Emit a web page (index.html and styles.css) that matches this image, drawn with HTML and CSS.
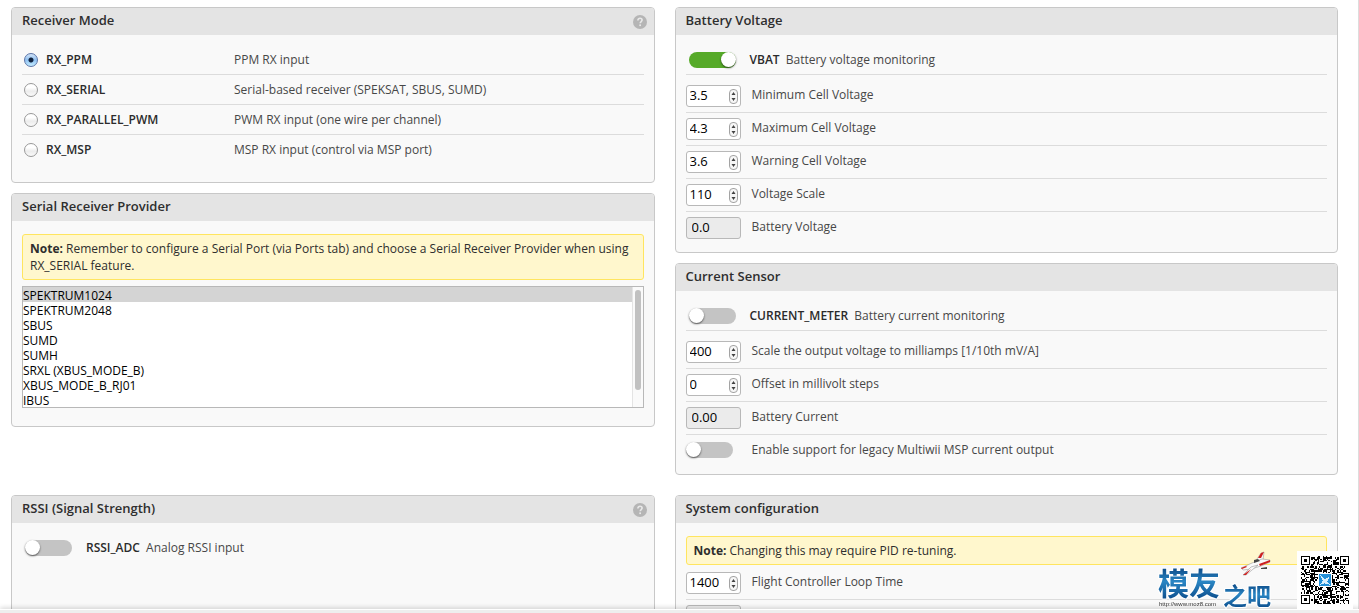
FILE: index.html
```html
<!DOCTYPE html>
<html lang="en">
<head>
    <meta charset="UTF-8">
    <title>Configuration</title>
    <link rel="stylesheet" href="styles.css">
</head>
<body>

    <svg class="defs" aria-hidden="true">
        <symbol id="spinner" viewBox="0 0 9 15">
            <rect x=".5" y=".5" width="8" height="14" rx="3.5" fill="#f6f6f6" stroke="#a3a3a3"/>
            <path d="M2.5 6 4.5 3 6.5 6ZM2.5 9 4.5 12 6.5 9Z" fill="#444"/>
        </symbol>
        <symbol id="help" viewBox="0 0 14 14">
            <circle cx="7" cy="7" r="7" fill="#b5b5b5"/>
            <path d="M4.9 5.4C4.9 4 5.8 3.3 7 3.3s2.1.7 2.1 1.8C9.100 6.500 7.200 6.600 7.200 8.300" fill="none" stroke="#e8e8e8" stroke-width="1.6"/>
            <rect x="6.300" y="9.400" width="1.700" height="1.700" fill="#e8e8e8"/>
        </symbol>
    </svg>

    <div class="content">
        <div class="columns">
            <div class="col left">
                <section class="box">
                    <h2 class="title">Receiver Mode <svg class="help"><use href="#help"/></svg></h2>
                    <div class="inner modes">
                        <div class="line">
                            <input type="radio" class="radio" name="rx" id="rx-ppm" checked>
                            <label for="rx-ppm">RX_PPM</label>
                            <span>PPM RX input</span>
                        </div>
                        <div class="line">
                            <input type="radio" class="radio" name="rx" id="rx-serial">
                            <label for="rx-serial">RX_SERIAL</label>
                            <span>Serial-based receiver (SPEKSAT, SBUS, SUMD)</span>
                        </div>
                        <div class="line">
                            <input type="radio" class="radio" name="rx" id="rx-pwm">
                            <label for="rx-pwm">RX_PARALLEL_PWM</label>
                            <span>PWM RX input (one wire per channel)</span>
                        </div>
                        <div class="line">
                            <input type="radio" class="radio" name="rx" id="rx-msp">
                            <label for="rx-msp">RX_MSP</label>
                            <span>MSP RX input (control via MSP port)</span>
                        </div>
                    </div>
                </section>

                <section class="box">
                    <h2 class="title" id="provider-title">Serial Receiver Provider</h2>
                    <div class="inner provider">
                        <p class="note"><strong>Note:</strong> Remember to configure a Serial Port (via Ports tab) and choose a Serial Receiver Provider when using RX_SERIAL feature.</p>
                        <div class="list-wrap">
                            <select class="list" size="8" aria-labelledby="provider-title">
                                <option selected>SPEKTRUM1024</option>
                                <option>SPEKTRUM2048</option>
                                <option>SBUS</option>
                                <option>SUMD</option>
                                <option>SUMH</option>
                                <option>SRXL (XBUS_MODE_B)</option>
                                <option>XBUS_MODE_B_RJ01</option>
                                <option>IBUS</option>
                            </select>
                            <span class="track"><span class="thumb"></span></span>
                        </div>
                    </div>
                </section>
            </div>

            <div class="col">
                <section class="box">
                    <h2 class="title">Battery Voltage</h2>
                    <div class="inner">
                        <div class="line feature">
                            <input type="checkbox" class="toggle" id="vbat" checked>
                            <label for="vbat"><b>VBAT</b> Battery voltage monitoring</label>
                        </div>
                        <div class="rows">
                            <div class="row">
                                <span class="number"><input type="number" id="vmin" value="3.5" step="0.1"><svg><use href="#spinner"/></svg></span>
                                <label for="vmin">Minimum Cell Voltage</label>
                            </div>
                            <div class="row">
                                <span class="number"><input type="number" id="vmax" value="4.3" step="0.1"><svg><use href="#spinner"/></svg></span>
                                <label for="vmax">Maximum Cell Voltage</label>
                            </div>
                            <div class="row">
                                <span class="number"><input type="number" id="vwarn" value="3.6" step="0.1"><svg><use href="#spinner"/></svg></span>
                                <label for="vwarn">Warning Cell Voltage</label>
                            </div>
                            <div class="row">
                                <span class="number"><input type="number" id="vscale" value="110"><svg><use href="#spinner"/></svg></span>
                                <label for="vscale">Voltage Scale</label>
                            </div>
                            <div class="row">
                                <span class="number"><input type="text" id="voltage" value="0.0" readonly></span>
                                <label for="voltage">Battery Voltage</label>
                            </div>
                        </div>
                    </div>
                </section>

                <section class="box">
                    <h2 class="title">Current Sensor</h2>
                    <div class="inner">
                        <div class="line feature">
                            <input type="checkbox" class="toggle" id="meter">
                            <label for="meter"><b>CURRENT_METER</b> Battery current monitoring</label>
                        </div>
                        <div class="rows">
                            <div class="row">
                                <span class="number"><input type="number" id="cscale" value="400"><svg><use href="#spinner"/></svg></span>
                                <label for="cscale">Scale the output voltage to milliamps [1/10th mV/A]</label>
                            </div>
                            <div class="row">
                                <span class="number"><input type="number" id="coffset" value="0"><svg><use href="#spinner"/></svg></span>
                                <label for="coffset">Offset in millivolt steps</label>
                            </div>
                            <div class="row">
                                <span class="number"><input type="text" id="current" value="0.00" readonly></span>
                                <label for="current">Battery Current</label>
                            </div>
                            <div class="row switch">
                                <input type="checkbox" class="toggle" id="legacy">
                                <label for="legacy">Enable support for legacy Multiwii MSP current output</label>
                            </div>
                        </div>
                    </div>
                </section>
            </div>

            <div class="col left">
                <section class="box fill">
                    <h2 class="title">RSSI (Signal Strength) <svg class="help"><use href="#help"/></svg></h2>
                    <div class="inner">
                        <div class="line feature plain">
                            <input type="checkbox" class="toggle" id="rssi">
                            <label for="rssi"><b>RSSI_ADC</b> Analog RSSI input</label>
                        </div>
                    </div>
                </section>
            </div>

            <div class="col">
                <section class="box">
                    <h2 class="title">System configuration</h2>
                    <div class="inner system">
                        <p class="note"><strong>Note:</strong> Changing this may require PID re-tuning.</p>
                        <div class="row">
                            <span class="number"><input type="number" id="loop" value="1400"><svg><use href="#spinner"/></svg></span>
                            <label for="loop">Flight Controller Loop Time</label>
                        </div>
                        <div class="row">
                            <span class="number"><input type="text" readonly aria-label="Cycle"></span>
                        </div>
                    </div>
                </section>
            </div>
        </div>
    </div>
    <div class="statusbar"></div>

    <div class="watermark">
        <svg class="logo" width="124" height="64" viewBox="0 0 124 64">
            <defs>
                <linearGradient id="blue" x1="0" y1="0" x2="0" y2="1">
                    <stop offset=".2" stop-color="#0d4a86"/>
                    <stop offset=".5" stop-color="#2a86c4"/>
                    <stop offset=".9" stop-color="#0c4d8c"/>
                </linearGradient>
            </defs>
            <g class="glyphs">
                <text x="5" y="46" font-size="31">模友</text>
                <text x="70" y="56" font-size="24">之吧</text>
            </g>
            <text class="url" x="6" y="57">http://www.moz8.com</text>
            <!-- plane -->
            <path d="M102 13 108 4 111 3 110 11Z" fill="#fafafa" stroke="#888" stroke-width=".5"/>
            <path d="M105 9 108 4 111 3 108 9Z" fill="#cf2020"/>
            <path d="M88 19 99 14 109 10 117 11 117 13 108 17 98 20 90 21Z" fill="#fafafa" stroke="#888" stroke-width=".5"/>
            <path d="M98 18 105 16 93 26 90 26Z" fill="#fafafa" stroke="#888" stroke-width=".5"/>
            <path d="M94 23 98 20 93 26 90 26ZM88 19 93 17 94 18 89 20ZM106 15 117 11 117 13 107 17Z" fill="#cf2020"/>
            <path d="M108 19 114 18 114 20 108 20ZM101 11 105 10 107 12 101 14Z" fill="#444"/>
        </svg>
        <svg class="qr" id="qr" viewBox="-3 -3 43 43" shape-rendering="crispEdges"></svg>
    </div>

<script src="qr.js"></script>
</body>
</html>
```
FILE: styles.css
```css
*{
    box-sizing: border-box;
    margin: 0;
    padding: 0;
}

body{
    display: flex;
    flex-direction: column;
    height: 100vh;
    overflow: hidden;
    background: #fff;
    color: #474747;
    font: 12px/18px "Open Sans", "Noto Sans", sans-serif;
}

.defs{
    position: absolute;
    width: 0;
    height: 0;
}

.content{
    flex: 1;
    min-height: 0;
    overflow: hidden;
    padding: 7px 20px 0 11px;
    border-right: 1px solid #ddd;
}

.columns{
    display: grid;
    grid-template-columns: 1fr 1fr;
    row-gap: 20px;
}

.col{
    display: flex;
    flex-direction: column;
    gap: 10px;
}

.left{
    padding-right: 20px;
}

.box{
    border: 1px solid #c8c8c8;
    border-radius: 4px;
    background: #f9f9f9;
    overflow: hidden;
}

.fill{
    flex: 1;
}

.title{
    display: flex;
    justify-content: space-between;
    height: 27px;
    padding: 0 7px 0 10px;
    background: #e4e4e4;
    color: #2e2e2e;
    font-size: 13px;
    font-weight: 600;
    line-height: 25px;
}

.help{
    width: 14px;
    height: 14px;
    margin-top: 7px;
}

.inner{
    padding: 10px 10px 7px;
}

.modes{
    padding-bottom: 17px;
}

.provider{
    padding: 13px 10px 18px;
}

.system{
    padding-top: 13px;
}

.line{
    display: flex;
    align-items: center;
    height: 30px;
    border-bottom: 1px solid #dcdcdc;
}

.modes .line:last-child,
.plain{
    border-color: transparent;
}

.modes label{
    width: 188px;
    color: #2b2b2b;
    font-weight: 600;
}

.feature{
    gap: 14px;
    padding-left: 3px;
}

.feature b{
    margin-right: 3px;
    color: #2b2b2b;
    font-weight: 600;
}

.radio{
    appearance: none;
    width: 14px;
    height: 14px;
    margin: 0 8px 0 2px;
    border: 1px solid #999;
    border-radius: 50%;
    background: linear-gradient(#fff 30%, #ececec 60%, #fafafa);
}

.radio:checked{
    border-color: #5b74a8;
    background: radial-gradient(circle, #10233f 2px, transparent 3px), linear-gradient(#d3e4f8, #8fc0f0 50%, #c3ecff);
}

.toggle{
    appearance: none;
    flex: none;
    width: 47px;
    height: 16px;
    border-radius: 8px;
    background: #c4c4c4;
}

.toggle::before{
    content: '';
    display: block;
    width: 15px;
    height: 15px;
    border-radius: 50%;
    background: #fff;
    box-shadow: 0 1px 2px rgba(0,0,0,.6);
}

.toggle:checked{
    background: #56aa29;
}

.toggle:checked::before{
    margin-left: auto;
}

.rows{
    padding-top: 5px;
}

.row{
    display: flex;
    gap: 11px;
    height: 33px;
    padding-top: 5px;
    border-bottom: 1px solid #dcdcdc;
    line-height: 20px;
}

.row:last-child{
    border-color: transparent;
}

.switch{
    height: 32px;
    gap: 19px;
}

.switch .toggle{
    margin-top: 2px;
}

.number{
    position: relative;
    width: 55px;
    height: 22px;
}

.number input{
    appearance: textfield;
    display: block;
    width: 100%;
    height: 22px;
    padding: 0 3px 2px;
    border: 1px solid #b8b8b8;
    border-radius: 3px;
    background: #fff;
    color: #000;
    font: 13px "Open Sans", "Noto Sans", sans-serif;
}

.number input::-webkit-inner-spin-button{
    appearance: none;
}

.number input[readonly]{
    padding-left: 5px;
    background: #ebebeb;
}

.number svg{
    position: absolute;
    top: 4px;
    right: 3px;
    width: 9px;
    height: 15px;
}

.note{
    padding: 5px 7px;
    margin-bottom: 6px;
    border: 1px solid #ffe55f;
    border-radius: 3px;
    background: #fff7cd;
    color: #2e2e2e;
    line-height: 17px;
}

.system .note{
    margin-bottom: 2px;
}

.list-wrap{
    position: relative;
}

.list{
    display: block;
    width: 100%;
    height: 122px;
    border: 1px solid #b8b8b8;
    border-radius: 0;
    background: #fff;
    color: #000;
    font: 12px/15px "Open Sans", "Noto Sans", sans-serif;
    outline: none;
    scrollbar-width: none;
}

.list option{
    height: 15px;
    min-height: 15px;
    padding: 0;
    line-height: 13px;
}

.list option:checked{
    background: #d4d4d4 linear-gradient(#d4d4d4, #d4d4d4);
    color: #000;
}

/* scrollbar drawn over the right edge of the list */
.track{
    position: absolute;
    top: 1px;
    right: 1px;
    bottom: 1px;
    width: 11px;
    padding: 3px 2px;
    border-left: 1px solid #e4e4e4;
    background: #fafafa;
    pointer-events: none;
}

.thumb{
    display: block;
    width: 6px;
    height: 88%;
    border-radius: 3px;
    background: #c1c1c1;
}

.statusbar{
    position: relative;
    height: 4px;
    border-top: 1px solid #fff;
    background: #eee;
    box-shadow: 0 -1px 5px rgba(0,0,0,.2);
}

.watermark{
    position: fixed;
    right: 6px;
    bottom: 0;
    display: flex;
    align-items: flex-end;
    gap: 20px;
}

.glyphs{
    fill: url(#blue);
    stroke: #fff;
    stroke-width: 2px;
    paint-order: stroke;
    font-family: "Noto Sans CJK SC", sans-serif;
    font-weight: 700;
}

.url{
    fill: #333;
    font: 6px "Liberation Sans", sans-serif;
}

.qr{
    width: 56px;
    height: 58px;
    margin-bottom: 4px;
    background: #fff;
}
```
FILE: qr.js
```js
var qr = document.getElementById('qr'),
    size = 37,
    seed = 7,
    d = '';

function rand(){
    seed = (seed * 16807) % 2147483647;
    return seed / 2147483647;
}

/* the three corner markers */
function marker(x, y){
    return 'M' + x + ' ' + y + 'h7v7h-7zm1 1v5h5v-5zm1 1h3v3h-3z';
}

function inMarker(x, y){
    return (x < 8 && y < 8) || (x > size - 9 && y < 8) || (x < 8 && y > size - 9);
}

for(var y = 0; y < size; y++){
    for(var x = 0; x < size; x++){
        var v = rand() < .52;
        (v && !inMarker(x, y)) && (d += 'M' + x + ' ' + y + 'h1v1h-1z');
    }
}
d += marker(0, 0) + marker(size - 7, 0) + marker(0, size - 7);

qr.innerHTML = '<path fill-rule="evenodd" d="' + d + '"/>' +
    '<rect x="13" y="13" width="11" height="11" fill="#fff"/>' +
    '<rect x="14" y="14" width="9" height="9" fill="#2290d8"/>' +
    '<path d="M15 15l3 3 4-2-2 4 2 2-4-1-3 1 2-3z" fill="#d8effc"/>';
```
